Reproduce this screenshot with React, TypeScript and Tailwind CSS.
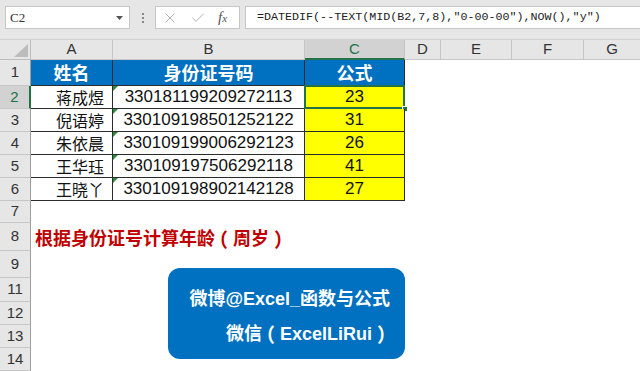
import { X, Check } from 'lucide-react';

const people = [
  ['蒋成煜', '330181199209272113', '23'],
  ['倪语婷', '330109198501252122', '31'],
  ['朱依晨', '330109199006292123', '26'],
  ['王华珏', '330109197506292118', '41'],
  ['王晓丫', '330109198902142128', '27'],
];

const sans = "font-['Liberation_Sans','Noto_Sans_CJK_SC',sans-serif]";
const cjk = "font-['Noto_Sans_CJK_SC',sans-serif]";

// fullwidth paren drawn centred in its em box, like YaHei does
function P({ c }: { c: string }) {
  return <span className="inline-block w-[1em] text-center [font-feature-settings:'hwid']">{c}</span>;
}

function RowHead({ n, active }: { n: string; active?: boolean }) {
  return (
    <div
      className={
        active
          ? 'w-[31px] shrink-0 flex items-center justify-center bg-[#d2d2d2] text-[#217346] border-r-2 border-r-[#217346] border-b border-b-[#c6c6c6] text-[15px]'
          : 'w-[31px] shrink-0 flex items-center justify-center bg-[#e6e6e6] text-[#333] border-r border-r-[#9e9e9e] border-b border-b-[#c6c6c6] text-[15px]'
      }
    >
      {n}
    </div>
  );
}

function Triangle() {
  return <div className="absolute left-0 top-0 w-0 h-0 border-t-[5px] border-t-[#2e8b3e] border-r-[5px] border-r-transparent" />;
}

export default function App() {
  return (
    <div className={`w-[640px] h-[371px] overflow-hidden bg-white ${sans}`}>
      {/* formula bar */}
      <div className="h-[40px] bg-[#e6e6e6] flex items-start pt-[6px] border-b border-[#d0d0d0]">
        <div className="ml-[5px] w-[125px] h-[23px] bg-white border border-[#c6c6c6] flex items-center justify-between pl-[4px] pr-[6px]">
          <span className="font-['Liberation_Serif',serif] text-[13px] text-[#333]">C2</span>
          <svg width="7" height="4" viewBox="0 0 7 4"><path d="M0 0h7L3.5 4z" fill="#555" /></svg>
        </div>
        <div className="w-[25px] h-[23px] flex flex-col items-center justify-center gap-[2px]">
          <div className="w-[2px] h-[2px] bg-[#888]" />
          <div className="w-[2px] h-[2px] bg-[#888]" />
          <div className="w-[2px] h-[2px] bg-[#888]" />
        </div>
        <div className="w-[85px] h-[23px] bg-white border border-[#c6c6c6] flex items-center pl-[6px] gap-[12px]">
          <X size={16} strokeWidth={1.3} color="#a6a6a6" />
          <Check size={16} strokeWidth={1.3} color="#a6a6a6" />
          <span className="font-['Liberation_Serif',serif] italic text-[15px] text-[#555] leading-none">
            f<span className="text-[11px]">x</span>
          </span>
        </div>
        <div className="ml-[5px] flex-1 h-[23px] bg-white border border-[#c6c6c6] border-r-0 flex items-center pl-[11px]">
          <span className="font-['Liberation_Mono',monospace] text-[11.7px] text-[#222] whitespace-nowrap">
            =DATEDIF(--TEXT(MID(B2,7,8),"0-00-00"),NOW(),"y")
          </span>
        </div>
      </div>

      {/* column headers */}
      <div className="h-[20px] flex text-[15px] text-[#333] bg-[#e6e6e6]">
        <div className="w-[31px] shrink-0 relative border-r border-b border-[#bdbdbd]">
          <div className="absolute right-[2px] bottom-[2px] w-0 h-0 border-l-[14px] border-l-transparent border-b-[13px] border-b-[#bcbcbc]" />
        </div>
        <div className="w-[82px] shrink-0 flex items-center justify-center border-r border-b border-[#c6c6c6]">A</div>
        <div className="w-[192px] shrink-0 flex items-center justify-center border-r border-b border-[#c6c6c6]">B</div>
        <div className="w-[100px] shrink-0 flex items-center justify-center bg-[#d2d2d2] text-[#217346] border-r border-[#c6c6c6] border-b-2 border-b-[#217346]">C</div>
        <div className="w-[36px] shrink-0 flex items-center justify-center border-r border-b border-[#c6c6c6]">D</div>
        <div className="w-[71px] shrink-0 flex items-center justify-center border-r border-b border-[#c6c6c6]">E</div>
        <div className="w-[72px] shrink-0 flex items-center justify-center border-r border-b border-[#c6c6c6]">F</div>
        <div className="flex-1 flex items-center justify-center border-b border-[#c6c6c6]">G</div>
      </div>

      <div className="relative">
        {/* row 1 */}
        <div className="h-[26px] flex">
          <RowHead n="1" />
          <div className={`w-[82px] shrink-0 bg-[#0070c0] border-r border-b border-[#2b2b2b] flex items-center justify-center text-white font-bold text-[18px] ${cjk}`}>姓名</div>
          <div className={`w-[192px] shrink-0 bg-[#0070c0] border-r border-b border-[#2b2b2b] flex items-center justify-center text-white font-bold text-[18px] ${cjk}`}>身份证号码</div>
          <div className={`w-[100px] shrink-0 bg-[#0070c0] border-r border-b border-[#2b2b2b] flex items-center justify-center text-white font-bold text-[18px] ${cjk}`}>公式</div>
        </div>

        {people.map(([name, id, age], i) => (
          <div key={id} className="h-[23px] flex">
            <RowHead n={String(i + 2)} active={i === 0} />
            <div className={`w-[82px] shrink-0 border-r border-b border-[#2b2b2b] flex items-center justify-end pr-[8px] text-[16px] text-[#111] ${cjk}`}>{name}</div>
            <div className="relative w-[192px] shrink-0 border-r border-b border-[#2b2b2b] flex items-center justify-center text-[17px] text-[#111]">
              <Triangle />
              {id}
            </div>
            <div className="relative w-[100px] shrink-0 bg-[#ffff00] border-r border-b border-[#2b2b2b] flex items-center justify-center text-[17px] text-[#111]">
              {age}
              {i === 0 && (
                <>
                  <div className="absolute -left-[1px] -top-[1px] -right-[1px] -bottom-[1px] border-2 border-[#217346]" />
                  <div className="absolute -right-[4px] -bottom-[4px] w-[6px] h-[6px] bg-[#217346] border border-white" />
                </>
              )}
            </div>
          </div>
        ))}

        <div className="h-[22px] flex"><RowHead n="7" /></div>
        <div className="h-[28px] flex">
          <RowHead n="8" />
          <div className={`pl-[4px] flex items-center whitespace-nowrap text-[18px] font-bold text-[#c00000] ${cjk}`}>
            根据身份证号计算年龄<P c="（" />周岁<P c="）" />
          </div>
        </div>
        <div className="h-[27px] flex"><RowHead n="9" /></div>
        <div className="h-[24px] flex"><RowHead n="11" /></div>
        <div className="h-[23px] flex"><RowHead n="12" /></div>
        <div className="h-[23px] flex"><RowHead n="13" /></div>
        <div className="h-[23px] flex"><RowHead n="14" /></div>

        {/* floating text box shape */}
        <div className={`absolute left-[168px] top-[208px] w-[237px] h-[91px] rounded-[12px] bg-[#0070c0] flex flex-col items-end pr-[15px] pt-[14px] text-white font-bold text-[18px] leading-[35px] ${sans}`}>
          <div className="whitespace-nowrap">微博@Excel_函数与公式</div>
          <div className="whitespace-nowrap">微信<P c="（" />ExcelLiRui<P c="）" /></div>
        </div>
      </div>
    </div>
  );
}
